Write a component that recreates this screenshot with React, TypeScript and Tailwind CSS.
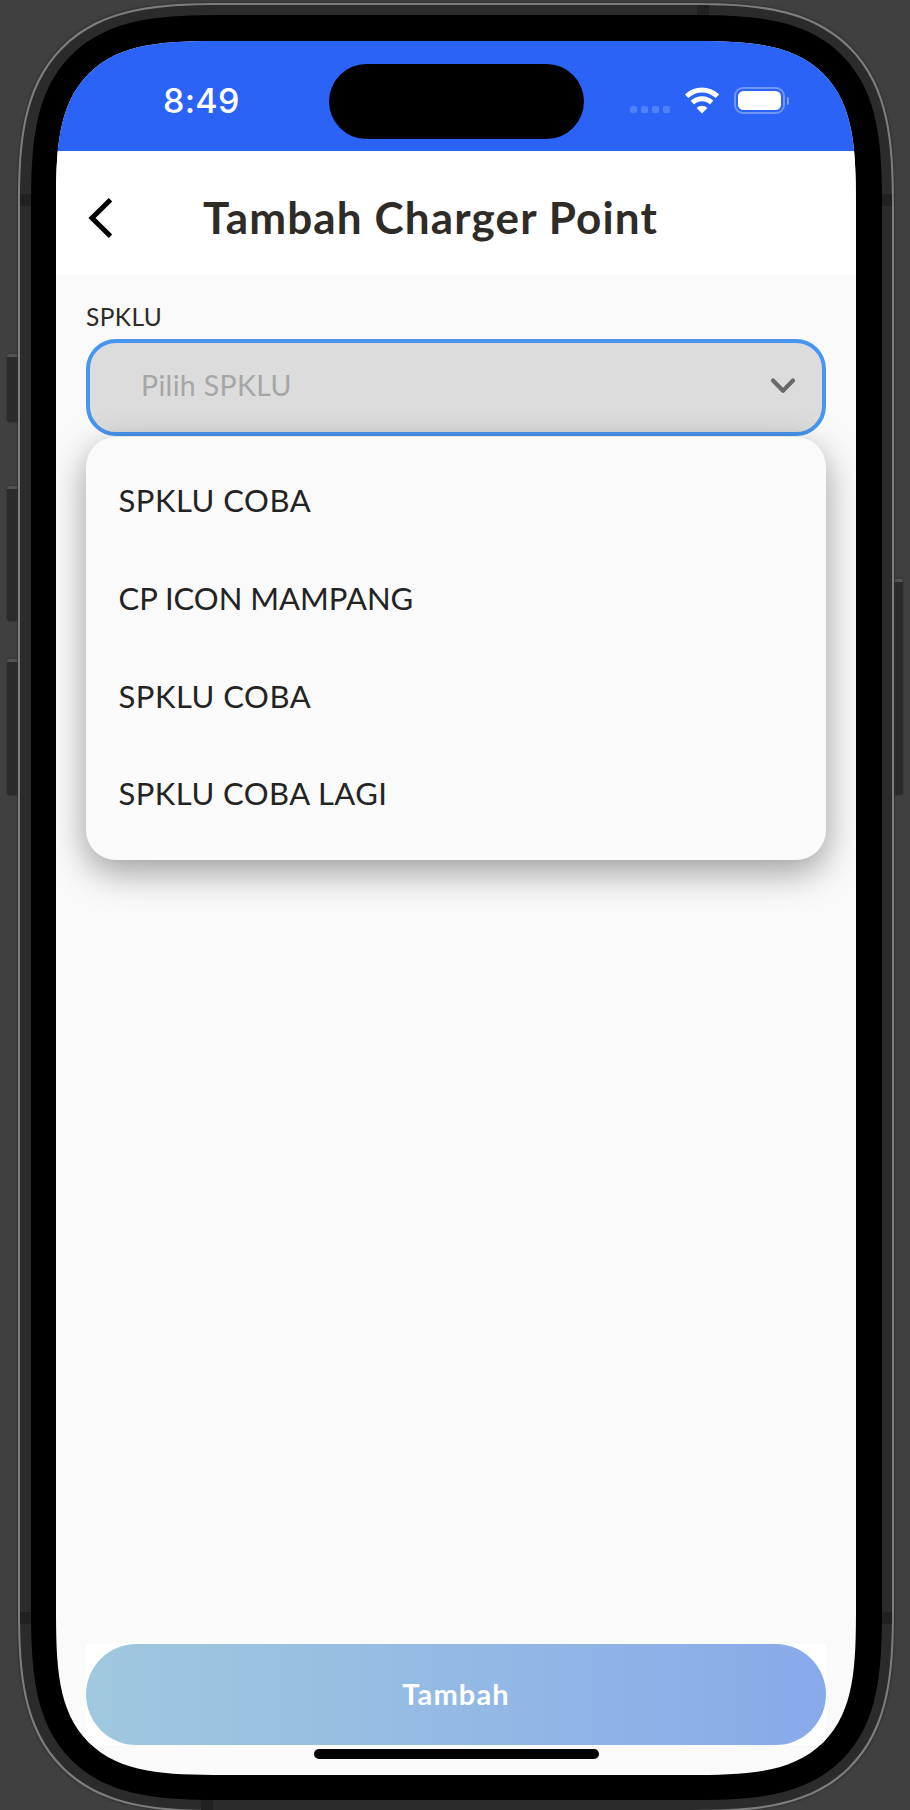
import React from "react";

const stations = [
  { name: "SPKLU COBA", tracking: "tracking-[0.5px]" },
  { name: "CP ICON MAMPANG", tracking: "tracking-[0px]" },
  { name: "SPKLU COBA", tracking: "tracking-[0.5px]" },
  { name: "SPKLU COBA LAGI", tracking: "tracking-[0.45px]" },
];

function SideButton({ className }: { className: string }) {
  return (
    <div
      className={`absolute border-t-[3px] border-t-[#545454] bg-[#2b2b2b] shadow-[0_0_2px_#262626] ${className}`}
    />
  );
}

function AntennaBand({ className }: { className: string }) {
  return <div className={`absolute bg-[#212121] ${className}`} />;
}

function StatusBar() {
  return (
    <div className="flex h-[110px] shrink-0 items-start bg-[#2b63f6]">
      <div className="w-[272.5px] pt-[43px] pl-[107px] font-['Inter',sans-serif] text-[34px] leading-[34px] font-medium tracking-[0.3px] text-white">
        8:49
      </div>
      <div className="mt-[22.5px] h-[75px] w-[255px] rounded-full bg-black" />
      <div className="flex items-center pt-[46px] pl-[46px]">
        <div className="mt-[17px] flex gap-[4px]">
          <span className="h-[7px] w-[7px] rounded-[2px] bg-[#4f82f8]" />
          <span className="h-[7px] w-[7px] rounded-[2px] bg-[#4f82f8]" />
          <span className="h-[7px] w-[7px] rounded-[2px] bg-[#4f82f8]" />
          <span className="h-[7px] w-[7px] rounded-[2px] bg-[#4f82f8]" />
        </div>
        <svg className="ml-[15px]" width="34" height="27" viewBox="0 0 34 27" fill="none">
          <path d="M1.6 9.2a22 22 0 0 1 30.8 0" stroke="#fff" strokeWidth="5" />
          <path d="M7.4 15.6a13.8 13.8 0 0 1 19.2 0" stroke="#fff" strokeWidth="5" />
          <path d="M17 26.4 11.6 20.9a7.6 7.6 0 0 1 10.8 0Z" fill="#fff" />
        </svg>
        <div className="ml-[15px] h-[27px] w-[51px] rounded-[9px] border-2 border-[#6f97fa] p-[2px]">
          <div className="h-full w-full rounded-[5.5px] bg-white" />
        </div>
        <div className="ml-[2px] h-[8px] w-[2.5px] rounded-r-full bg-[#7ea1fa]" />
      </div>
    </div>
  );
}

function Header() {
  return (
    <header className="flex h-[124px] shrink-0 items-center bg-white">
      <svg className="mt-[10px] ml-[30px]" width="28" height="42" viewBox="0 0 28 42" fill="none">
        <path d="M24.5 2.8 6 21l18.5 18.2" stroke="#000" strokeWidth="5" />
      </svg>
      <h1 className="mt-[8px] ml-[89px] font-['Lato',sans-serif] text-[44px] leading-[50px] font-bold tracking-[1.15px] whitespace-nowrap text-[#2f2b27]">
        Tambah Charger Point
      </h1>
    </header>
  );
}

function StationSelect() {
  return (
    <div className="font-['Lato',sans-serif]">
      <label className="block h-[64px] pt-[27px] text-[24.5px] leading-[30px] tracking-[0.4px] text-[#2f2b27]">
        SPKLU
      </label>
      <div className="flex h-[97px] items-center justify-between rounded-[30px] border-4 border-[#4895ef] bg-[#dcdcdc] pr-[26px] pl-[51px]">
        <span className="mt-[-5px] text-[28.5px] leading-[34px] tracking-[0.35px] text-[#a6a6a6]">
          Pilih SPKLU
        </span>
        <svg className="mt-[-4px]" width="26" height="18" viewBox="0 0 26 18" fill="none">
          <path
            d="m3 3.5 10 10.2 10-10.2"
            stroke="#696969"
            strokeWidth="4.2"
            strokeLinecap="round"
            strokeLinejoin="round"
          />
        </svg>
      </div>
      <ul className="relative mt-[0.5px] h-[423px] rounded-[30px] bg-[#fafafa] pt-[15px] shadow-[0_12px_36px_rgba(0,0,0,0.38)]">
        {stations.map(({ name, tracking }, i) => (
          <li
            key={i}
            className={`flex h-[97.7px] items-center pl-[32.5px] text-[31px] leading-[36px] text-[#232323] ${tracking}`}
          >
            {name}
          </li>
        ))}
      </ul>
    </div>
  );
}

export default function App() {
  return (
    <div className="relative h-[1810px] w-[910px] overflow-hidden bg-[#404040] pt-[3px] pl-[18px]">
      <SideButton className="top-[354px] left-[7px] h-[68px] w-[13px] rounded-l-[3px]" />
      <SideButton className="top-[486px] left-[7px] h-[135px] w-[13px] rounded-l-[3px]" />
      <SideButton className="top-[659px] left-[7px] h-[136px] w-[13px] rounded-l-[3px]" />
      <SideButton className="top-[579px] left-[892px] h-[216px] w-[11px] rounded-r-[3px]" />

      <div className="relative h-[1809px] w-[876px] rounded-[137px] border-2 border-[#7d7d7d] bg-[#2b2b2b] px-[10.5px] py-[10px] shadow-[0_0_2px_1px_#333333] supports-[corner-shape:squircle]:rounded-[206px] [corner-shape:superellipse(1.54)]">
        <AntennaBand className="top-[189px] left-0 h-[12px] w-[11px]" />
        <AntennaBand className="top-[189px] right-0 h-[12px] w-[11px]" />
        <AntennaBand className="top-[1607px] left-0 h-[12px] w-[11px]" />
        <AntennaBand className="top-[1607px] right-0 h-[12px] w-[11px]" />
        <AntennaBand className="top-0 left-[677px] h-[11px] w-[12px]" />
        <AntennaBand className="bottom-0 left-[181px] h-[11px] w-[12px]" />

        <div className="relative h-[1785px] rounded-[126px] bg-black px-[25.5px] pt-[26px] pb-[25px] supports-[corner-shape:squircle]:rounded-[194px] [corner-shape:superellipse(1.58)]">
          <div className="flex h-full flex-col overflow-hidden rounded-[112px] bg-[#fafafa] supports-[corner-shape:squircle]:rounded-[168px] [corner-shape:superellipse(1.68)]">
            <StatusBar />
            <Header />
            <main className="flex min-h-0 grow flex-col justify-between px-[30px]">
              <StationSelect />
              <div className="pb-[16px]">
                <div className="bg-white">
                  <button className="flex h-[101px] w-full items-center justify-center rounded-full bg-linear-to-r from-[#9fc9de] to-[#88aaea] pb-[2px] font-['Lato',sans-serif] text-[29px] leading-[34px] font-bold tracking-[1.1px] text-white">
                    Tambah
                  </button>
                </div>
                <div className="mt-[3.5px] ml-[228px] h-[10.5px] w-[285px] rounded-full bg-black" />
              </div>
            </main>
          </div>
        </div>
      </div>
    </div>
  );
}
